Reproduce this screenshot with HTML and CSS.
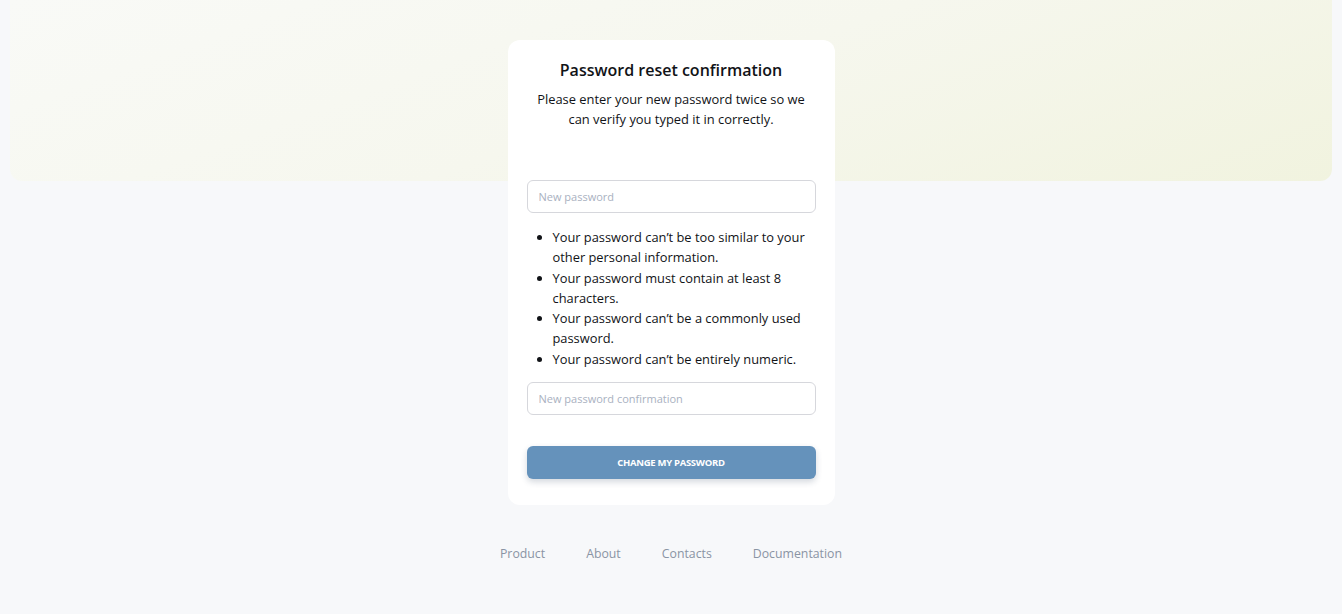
FILE: index.html
```html
<!DOCTYPE html>
<html>
<head>
  <meta charset="UTF-8">
  <title>Password reset confirmation</title>
  <link rel="stylesheet" href="styles.css">
</head>
<body>
  <div class="hero"></div>
  <main class="card">
    <h1>Password reset confirmation</h1>
    <p class="lead">Please enter your new password twice so we can verify you typed it in correctly.</p>
    <form class="form">
      <input class="field" type="password" placeholder="New password">
      <ul class="rules">
        <li>Your password can’t be too similar to your other personal information.</li>
        <li>Your password must contain at least 8 characters.</li>
        <li>Your password can’t be a commonly used password.</li>
        <li>Your password can’t be entirely numeric.</li>
      </ul>
      <input class="field" type="password" placeholder="New password confirmation">
      <button class="submit" type="button">Change my password</button>
    </form>
  </main>
  <footer class="footer">
    <a href="#">Product</a>
    <a href="#">About</a>
    <a href="#">Contacts</a>
    <a href="#">Documentation</a>
  </footer>
</body>
</html>
```

FILE: styles.css
```css
* {
  box-sizing: border-box;
  font-family: "Open Sans", sans-serif;
}
html,
body {
  margin: 0;
  background: #f7f8fa;
  color: #111317;
}
.hero {
  height: 181px;
  margin: 0 10px;
  border-radius: 0 0 12px 12px;
  background: linear-gradient(160deg, #f9faf7 0%, #f6f7ee 50%, #f1f3df 100%);
}
.card {
  width: 327px;
  margin: -141px auto 0;
  padding: 18px 19px 26px;
  background: #fff;
  border-radius: 12px;
  position: relative;
}
h1 {
  margin: 0;
  font-size: 16px;
  font-weight: 600;
  line-height: 24px;
  text-align: center;
}
.lead {
  margin: 7px 0 0;
  font-size: 12.9px;
  line-height: 20px;
  text-align: center;
}
.form {
  display: flex;
  flex-direction: column;
  margin-top: 51px;
}
.field {
  height: 33px;
  padding: 0 11px;
  border: 1px solid #d6d7dc;
  border-radius: 6px;
  font-size: 11px;
  color: #111317;
  outline: none;
}
.field::placeholder {
  color: #a9b1bf;
}
.rules {
  margin: 14px 0 13px;
  padding-left: 26px;
  font-size: 12.85px;
  line-height: 20.3px;
}
.submit {
  height: 33px;
  margin-top: 31px;
  border: none;
  border-radius: 6px;
  background: #6592bb;
  color: #fff;
  font-size: 9.5px;
  font-weight: 700;
  letter-spacing: -0.3px;
  text-transform: uppercase;
  box-shadow: 0 3px 6px rgba(40, 60, 90, 0.2);
}
.footer {
  display: flex;
  justify-content: center;
  gap: 41px;
  padding: 40px 0 39px;
  font-size: 12.3px;
}
.footer a {
  color: #8a94a4;
  text-decoration: none;
}
```
